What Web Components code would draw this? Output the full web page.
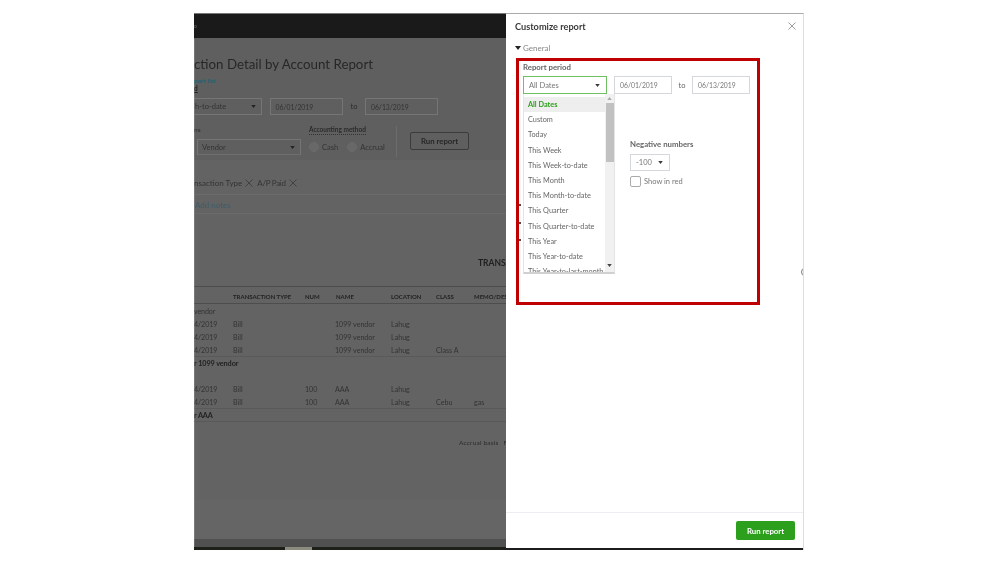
<!doctype html>
<html>
<head>
<meta charset="utf-8">
<title>Customize report</title>
<style>
html, body { margin: 0; background: #fff; }
body { font-family: Lato, "Open Sans", "Liberation Sans", sans-serif; }
</style>
</head>
<body>
<shot-frame>
  <report-backdrop></report-backdrop>
  <customize-panel></customize-panel>
</shot-frame>

<script>
const caret = (size = 6) => `<svg width="${size}" height="${size - 2}" viewBox="0 0 6 4"><path d="M0 0h6L3 4z" fill="currentColor"/></svg>`;
const cross = (size, color, width = 1) => `<svg width="${size}" height="${size}" viewBox="0 0 8 8"><path d="M.5.5l7 7M7.5.5l-7 7" stroke="${color}" stroke-width="${width}" fill="none"/></svg>`;

class ShotFrame extends HTMLElement {
  constructor() {
    super();
    this.attachShadow({ mode: 'open' });
    this.shadowRoot.innerHTML = `
<style>
:host {
  display: flex;
  width: 610px;
  height: 537px;
  margin: 13px 0 0 194px;
  overflow: hidden;
  filter: blur(.3px);
}
</style>
<slot></slot>`;
  }
}

const tableRows = [
  { h: 14, cells: ['vendor'] },
  { h: 13, cells: ['4/2019', 'Bill', '', '1099 vendor', 'Lahug'] },
  { h: 13, cells: ['4/2019', 'Bill', '', '1099 vendor', 'Lahug'] },
  { h: 13, line: true, cells: ['4/2019', 'Bill', '', '1099 vendor', 'Lahug', 'Class A'] },
  { h: 13, bold: true, cells: ['r 1099 vendor'] },
  { h: 13, cells: [] },
  { h: 13, cells: ['4/2019', 'Bill', '100', 'AAA', 'Lahug'] },
  { h: 13, line: true, cells: ['4/2019', 'Bill', '100', 'AAA', 'Lahug', 'Cebu', 'gas'] },
  { h: 13, line: true, bold: true, cells: ['r AAA'] }
];

class ReportBackdrop extends HTMLElement {
  constructor() {
    super();
    this.attachShadow({ mode: 'open' });
    const rows = tableRows.reduce((html, row) => {
      const span = row.cells.length === 1 ? 'span' : '';
      return html + `<div class="row ${row.line ? 'line' : ''} ${row.bold ? 'bold' : ''} ${span}" style="height:${row.h}px">${
        row.cells.map(c => `<span>${c}</span>`).join('')
      }</div>`;
    }, '');
    this.shadowRoot.innerHTML = `
<style>
:host {
  position: relative;
  display: flex;
  flex-direction: column;
  width: 312px;
  flex: none;
  overflow: hidden;
  background: #636363;
  color: #2b2b2b;
  font-size: 7.5px;
  white-space: nowrap;
  border-top: 1px solid #777;
  box-sizing: border-box;
  filter: blur(.25px);
}
:host::after { content: ""; position: absolute; left: 0; top: 25px; bottom: 3px; width: 1px; background: rgba(255, 255, 255, .14); }
.top { height: 24px; flex: none; background: #1a1a1a; color: #666; font-size: 5px; line-height: 24px; }
.filters { height: 122px; flex: none; background: #5f5f5f; padding-top: 16px; box-sizing: border-box; }
h1 { margin: 0; font-size: 13.3px; line-height: 20px; font-weight: 400; color: #272727; }
.link { margin-top: 3px; font-size: 6.5px; line-height: 8px; color: #1d5f70; }
.saved { font-size: 6.5px; line-height: 7px; font-weight: 700; text-decoration: underline; color: #222; }
.dates { display: flex; align-items: center; gap: 7.5px; margin-top: 6px; height: 17px; }
.box { display: flex; align-items: center; justify-content: space-between; box-sizing: border-box; height: 17px; border: 1px solid #757575; padding: 0 5px; color: #333; font-size: 7.5px; }
.box svg { color: #222; }
.period { width: 69px; margin-left: -1px; padding-left: 1px; }
.date { width: 73.5px; font-size: 6.8px; }
.options { display: flex; margin-top: 11px; height: 31px; }
.col-a { width: 107px; flex: none; }
.col-b { width: 87px; flex: none; margin-left: 8px; }
.label { line-height: 8px; font-size: 6.5px; height: 13px; }
.acct { font-weight: 700; border-bottom: 1px dotted #333; display: inline-block; line-height: 7px; height: 8px; }
.vendor { margin-left: 3px; width: 104px; height: 16px; padding-left: 4px; border-bottom-color: #6e6e6e; }
.radios { display: flex; align-items: center; gap: 3px; height: 16px; font-size: 7.5px; color: #333; }
.radios i { width: 8px; height: 8px; border-radius: 50%; border: 1px solid #6a6a6a; background: #686868; flex: none; }
.radios i + span { margin-right: 6px; }
.divider { width: 1px; background: #6c6c6c; }
.run { display: flex; align-items: center; justify-content: center; align-self: center; width: 59px; height: 18px; margin: -1px 0 0 13px; border: 1px solid #3b3b3b; box-sizing: border-box; border-radius: 2px; font-size: 7.8px; font-weight: 700; color: #262626; }
.tokens { height: 35px; flex: none; display: flex; align-items: center; gap: 5px; padding-top: 11px; box-sizing: border-box; font-size: 8px; color: #333; border-bottom: 1px solid #6b6b6b; }
.tokens span { display: inline-flex; align-items: center; gap: 3px; }
.tokens span + span { letter-spacing: -.3px; margin-left: -1px; }
.notes { height: 19px; flex: none; line-height: 20px; padding-left: 1px; font-size: 8px; color: #3f5c68; border-bottom: 1px solid #6a6a6a; box-sizing: border-box; }
.heading { height: 72px; flex: none; box-sizing: border-box; padding-top: 43px; padding-left: 284px; font-size: 8.5px; line-height: 12px; font-weight: 700; color: #1f1f1f; }
.head, .row { display: grid; grid-template-columns: 39px 72px 30px 56px 45px 38px 32px; align-items: center; box-sizing: border-box; }
.head { height: 18px; padding-top: 2px; border-top: 1px solid #4d4d4d; border-bottom: 1px solid #4d4d4d; font-size: 6px; font-weight: 700; color: #222; }
.head span:nth-child(4) { padding-left: 1px; }
.row { color: #333; font-size: 7.1px; }
.row.span span { grid-column: 1 / -1; }
.row span:first-child { letter-spacing: -.1px; }
.row.bold { font-weight: 700; color: #222; font-size: 7.3px; }
.row.line { border-bottom: 1px solid #595959; }
.foot { display: flex; gap: 5px; padding: 16px 0 0 265px; height: 78px; flex: none; box-sizing: border-box; font-size: 6.5px; line-height: 10px; color: #2b2b2b; letter-spacing: .2px; }
.lower { flex: 1; background: #656565; }
.band { height: 8px; flex: none; background: #505050; }
.scroll { display: flex; height: 3px; flex: none; background: #1d2018; }
.scroll b { width: 27px; margin-left: 91px; background: #8b8b80; }
</style>
<div class="top">o</div>
<div class="filters">
  <h1>ction Detail by Account Report</h1>
  <div class="link">port list</div>
  <div class="saved">d</div>
  <div class="dates">
    <div class="box period"><span>h-to-date</span>${caret(5)}</div>
    <div class="box date">06/01/2019</div>
    <span>to</span>
    <div class="box date">06/13/2019</div>
  </div>
  <div class="options">
    <div class="col-a">
      <div class="label">ns</div>
      <div class="box vendor"><span>Vendor</span>${caret(5)}</div>
    </div>
    <div class="col-b">
      <div class="label"><span class="acct">Accounting method</span></div>
      <div class="radios"><i></i><span>Cash</span><i></i><span>Accrual</span></div>
    </div>
    <div class="divider"></div>
    <div class="run">Run report</div>
  </div>
</div>
<div class="tokens">
  <span>nsaction Type ${cross(8, '#3a3a3a', .8)}</span>
  <span>A/P Paid ${cross(8, '#3a3a3a', .8)}</span>
</div>
<div class="notes">Add notes</div>
<div class="heading">TRANSA</div>
<div class="head"><span></span><span>TRANSACTION TYPE</span><span>NUM</span><span>NAME</span><span>LOCATION</span><span>CLASS</span><span>MEMO/DES</span></div>
${rows}
<div class="foot"><span>Accrual basis</span><span>F</span></div>
<div class="lower"></div>
<div class="band"></div>
<div class="scroll"><b></b></div>`;
  }
}

class SelectBox extends HTMLElement {
  constructor() {
    super();
    this.attachShadow({ mode: 'open' });
    this.shadowRoot.innerHTML = `
<style>
:host {
  display: flex;
  align-items: center;
  justify-content: space-between;
  box-sizing: border-box;
  height: 18px;
  padding: 0 5px;
  border: 1px solid #d4d7dc;
  color: #777;
  font-size: 7.5px;
  background: #fff;
  flex: none;
}
:host([active]) { border-color: #6fbf63; }
:host([plain]) { font-size: 6.8px; }
svg { color: #393939; margin-right: 1px; }
</style>
<span><slot></slot></span>${this.hasAttribute('plain') ? '' : caret(5)}`;
  }
}

class PeriodList extends HTMLElement {
  constructor() {
    super();
    this.attachShadow({ mode: 'open' });
    const items = ['All Dates', 'Custom', 'Today', 'This Week', 'This Week-to-date', 'This Month',
      'This Month-to-date', 'This Quarter', 'This Quarter-to-date', 'This Year', 'This Year-to-date', 'This Year-to-last-month'];
    this.shadowRoot.innerHTML = `
<style>
:host {
  position: absolute;
  left: 0;
  top: 18px;
  width: 92px;
  height: 180px;
  box-sizing: border-box;
  display: flex;
  background: #fff;
  border: 1px solid #e4e4e4;
  border-top: none;
  border-bottom: 2px solid #d0d0d0;
  overflow: hidden;
  z-index: 2;
}
ul { margin: 3px 0 0; padding: 0; list-style: none; flex: 1; }
li { height: 15.2px; line-height: 15.2px; padding-left: 4px; font-size: 7.3px; color: #666; white-space: nowrap; }
li:first-child { background: #eee; color: #2ca01c; font-weight: 700; }
.bar { width: 9px; flex: none; background: #f1f1f1; display: flex; flex-direction: column; align-items: center; color: #444; position: relative; }
.bar svg:first-child { margin-top: 3px; transform: rotate(180deg); color: #aaa; }
.bar b { width: 8px; height: 59px; margin-top: 3px; background: #c1c1c1; }
.bar svg:last-child { position: absolute; bottom: 5px; }
</style>
<ul>${items.map(i => `<li>${i}</li>`).join('')}</ul>
<div class="bar">${caret(5)}<b></b>${caret(5)}</div>`;
  }
}

class CustomizePanel extends HTMLElement {
  constructor() {
    super();
    this.attachShadow({ mode: 'open' });
    this.shadowRoot.innerHTML = `
<style>
:host {
  display: flex;
  flex-direction: column;
  width: 298px;
  flex: none;
  box-sizing: border-box;
  position: relative;
  overflow: hidden;
  background: #fff;
  color: #666;
  font-size: 8px;
  border-top: 1px solid #aaa;
  border-right: 1px solid #ddd;
}
.title { display: flex; justify-content: space-between; align-items: center; height: 26px; flex: none; padding: 0 7px 2px 9px; box-sizing: border-box; }
.title h2 { margin: 0; font-size: 9.2px; font-weight: 700; color: #3a3a3a; }
.general { display: flex; align-items: center; gap: 2px; height: 16px; flex: none; padding-left: 9px; color: #888; font-size: 8px; }
.general svg { color: #222; }
.mark { position: relative; width: 244px; height: 247px; flex: none; margin: 2px 0 0 10px; padding: 0 4px; box-sizing: border-box; border: 3px solid #c00000; }
.label { height: 12px; line-height: 12px; font-size: 7.8px; font-weight: 700; color: #666; }
.period { position: relative; display: flex; align-items: center; margin-top: 3px; }
.to { width: 20px; text-align: center; font-size: 7.5px; }
.negative { margin: 44px 0 0 107px; }
.negative .label { margin-bottom: 4px; }
.check { display: flex; align-items: center; gap: 3px; margin-top: 5px; font-size: 7.5px; color: #777; }
.check i { width: 11px; height: 11px; box-sizing: border-box; border: 1px solid #aaa; border-radius: 2px; }
.dots { position: absolute; left: 0; top: 143px; display: flex; flex-direction: column; gap: 15.5px; }
.dots i { width: 2px; height: 2px; background: #111; border-radius: 50%; }
.spin { position: absolute; left: 295px; top: 254px; width: 8px; height: 8px; box-sizing: border-box; border: 1px solid #777; border-radius: 50%; }
.spacer { flex: 1; }
.footer { display: flex; justify-content: flex-end; align-items: flex-start; height: 36px; flex: none; padding: 8px 8px 0 0; box-sizing: border-box; border-top: 1px solid #eeeef2; }
.footer div { display: flex; align-items: center; justify-content: center; width: 59px; height: 19px; background: #2ca01c; border-radius: 2px; color: #fff; font-size: 7.8px; font-weight: 700; }
.edge { height: 2px; flex: none; background: #1c1c1c; }
</style>
<div class="title"><h2>Customize report</h2>${cross(8, '#9a9a9a')}</div>
<div class="general">${caret(6)}<span>General</span></div>
<div class="mark">
  <div class="label">Report period</div>
  <div class="period">
    <select-box active style="width:84px">All Dates</select-box>
    <span style="width:7px"></span>
    <select-box plain style="width:58px">06/01/2019</select-box>
    <span class="to">to</span>
    <select-box plain style="width:58px">06/13/2019</select-box>
    <period-list></period-list>
  </div>
  <div class="negative">
    <div class="label">Negative numbers</div>
    <select-box style="width:40px;height:17px">-100</select-box>
    <div class="check"><i></i><span>Show in red</span></div>
  </div>
  <div class="dots"><i></i><i></i><i></i></div>
</div>
<div class="spin"></div>
<div class="spacer"></div>
<div class="footer"><div>Run report</div></div>
<div class="edge"></div>`;
  }
}

customElements.define('select-box', SelectBox);
customElements.define('period-list', PeriodList);
customElements.define('customize-panel', CustomizePanel);
customElements.define('report-backdrop', ReportBackdrop);
customElements.define('shot-frame', ShotFrame);
</script>
</body>
</html>
